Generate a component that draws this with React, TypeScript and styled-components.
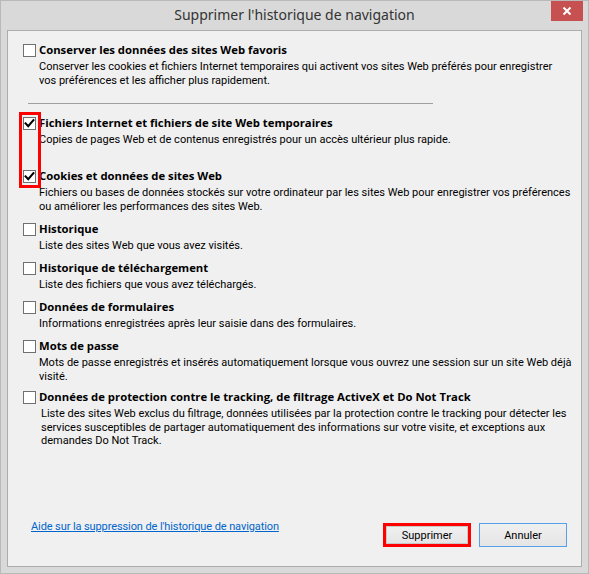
import React from "react";
import styled, { createGlobalStyle } from "styled-components";

const GlobalStyle = createGlobalStyle`
  html, body { margin: 0; padding: 0; background: #d9d9d9; }
  body { font-family: "Roboto", "Liberation Sans", sans-serif; }
`;

const Window = styled.div`
  width: 589px;
  height: 574px;
  box-sizing: border-box;
  border: 1px solid #b9b9b9;
  background: #d9d9d9;
  display: flex;
  flex-direction: column;
`;

const TitleBar = styled.div`
  position: relative;
  height: 29px;
  flex-shrink: 0;
  display: flex;
  justify-content: center;
  align-items: flex-start;
`;

const Title = styled.h1`
  margin: 0;
  font: 400 14px/28px "Noto Sans", "Open Sans", sans-serif;
  color: #333333;
`;

const CloseButton = styled.button`
  position: absolute;
  top: 0;
  right: 5px;
  width: 32px;
  height: 20px;
  padding: 0;
  border: 0;
  background: #c75050;
  display: flex;
  align-items: center;
  justify-content: center;
`;

const Panel = styled.div`
  position: relative;
  flex: 1;
  margin: 0 6px 6px;
  border: 1px solid #adadad;
  background: #f0f0f0;
  display: flex;
  flex-direction: column;
`;

const ItemList = styled.div`
  display: flex;
  flex-direction: column;
  padding: 12px 0 0 15px;
`;

const Item = styled.div<{ $after: number }>`
  display: flex;
  align-items: flex-start;
  margin-bottom: ${(p) => p.$after}px;
`;

const Box = styled.span`
  flex-shrink: 0;
  width: 13px;
  height: 13px;
  box-sizing: border-box;
  margin-top: 1px;
  border: 1px solid #707070;
  background: #ffffff;
  display: flex;
  align-items: center;
  justify-content: center;
`;

const TextCol = styled.div`
  margin-left: 3px;
  display: flex;
  flex-direction: column;
`;

const Heading = styled.div`
  font: 700 11.3px/14px "Open Sans", "Noto Sans", sans-serif;
  color: #000000;
  white-space: nowrap;
`;

const Desc = styled.div<{ $indent: number }>`
  margin-top: 3px;
  padding-left: ${(p) => p.$indent}px;
  font: 400 11px/13.5px "Roboto", "Liberation Sans", sans-serif;
  color: #000000;
  white-space: nowrap;
`;

const Line = styled.span`
  display: block;
`;

const Separator = styled.hr`
  margin: 16px 0 12px 5px;
  width: 405px;
  height: 1px;
  border: 0;
  background: #a0a0a0;
`;

const Highlight = styled.div`
  position: absolute;
  left: 11px;
  top: 81px;
  width: 22px;
  height: 76px;
  box-sizing: border-box;
  border: 3px solid #ff0000;
  pointer-events: none;
`;

const Footer = styled.div`
  margin-top: auto;
  display: flex;
  align-items: flex-start;
  padding: 0 14px 19px 23px;
`;

const HelpLink = styled.a`
  margin-right: auto;
  font: 400 11px/13px "Roboto", "Liberation Sans", sans-serif;
  letter-spacing: -0.1px;
  color: #0066cc;
  text-decoration: underline;
  cursor: pointer;
`;

const Buttons = styled.div`
  margin-top: 3px;
  display: flex;
  gap: 8px;
`;

const DialogButton = styled.button<{ $variant: "highlight" | "focus" }>`
  width: 88px;
  height: 24px;
  box-sizing: border-box;
  padding: 0;
  background: linear-gradient(#f0f0f0, #e5e5e5);
  font: 400 11px/1 "Roboto", "Liberation Sans", sans-serif;
  color: #000000;
  border: ${(p) => (p.$variant === "highlight" ? "3px solid #ff0000" : "1px solid #56a0e8")};
  box-shadow: ${(p) => (p.$variant === "highlight" ? "inset 0 0 0 1px #c8c8c8" : "none")};
`;

type Entry = {
  title: string;
  lines: string[];
  checked: boolean;
  after: number;
  indent?: number;
};

const entries: Entry[] = [
  {
    title: "Fichiers Internet et fichiers de site Web temporaires",
    lines: ["Copies de pages Web et de contenus enregistrés pour un accès ultérieur plus rapide."],
    checked: true,
    after: 22.5,
  },
  {
    title: "Cookies et données de sites Web",
    lines: [
      "Fichiers ou bases de données stockés sur votre ordinateur par les sites Web pour enregistrer vos préférences",
      "ou améliorer les performances des sites Web.",
    ],
    checked: true,
    after: 9,
  },
  {
    title: "Historique",
    lines: ["Liste des sites Web que vous avez visités."],
    checked: false,
    after: 8.5,
  },
  {
    title: "Historique de téléchargement",
    lines: ["Liste des fichiers que vous avez téléchargés."],
    checked: false,
    after: 8.5,
  },
  {
    title: "Données de formulaires",
    lines: ["Informations enregistrées après leur saisie dans des formulaires."],
    checked: false,
    after: 8.5,
  },
  {
    title: "Mots de passe",
    lines: [
      "Mots de passe enregistrés et insérés automatiquement lorsque vous ouvrez une session sur un site Web déjà",
      "visité.",
    ],
    checked: false,
    after: 7,
  },
  {
    title: "Données de protection contre le tracking, de filtrage ActiveX et Do Not Track",
    lines: [
      "Liste des sites Web exclus du filtrage, données utilisées par la protection contre le tracking pour détecter les",
      "services susceptibles de partager automatiquement des informations sur votre visite, et exceptions aux",
      "demandes Do Not Track.",
    ],
    checked: false,
    after: 0,
    indent: 2,
  },
];

function CheckMark() {
  return (
    <svg width="11" height="11" viewBox="0 0 11 11">
      <path d="M1.6 5.4 L4.2 8.2 L9.4 2.2" fill="none" stroke="#000" strokeWidth="2.1" strokeLinecap="square" />
    </svg>
  );
}

function Option({ entry }: { entry: Entry }) {
  return (
    <Item $after={entry.after}>
      <Box>{entry.checked && <CheckMark />}</Box>
      <TextCol>
        <Heading>{entry.title}</Heading>
        <Desc $indent={entry.indent ?? 0}>
          {entry.lines.map((l) => (
            <Line key={l}>{l}</Line>
          ))}
        </Desc>
      </TextCol>
    </Item>
  );
}

export default function App() {
  return (
    <>
      <GlobalStyle />
      <Window>
        <TitleBar>
          <Title>Supprimer l'historique de navigation</Title>
          <CloseButton aria-label="Fermer">
            <svg width="10" height="10" viewBox="0 0 10 10">
              <path d="M1.5 1.5 L8.5 8.5 M8.5 1.5 L1.5 8.5" stroke="#fff" strokeWidth="2" />
            </svg>
          </CloseButton>
        </TitleBar>
        <Panel>
          <ItemList>
            <Item $after={0}>
              <Box />
              <TextCol>
                <Heading>Conserver les données des sites Web favoris</Heading>
                <Desc $indent={0}>
                  <Line>
                    Conserver les cookies et fichiers Internet temporaires qui activent vos sites Web préférés pour enregistrer
                  </Line>
                  <Line>vos préférences et les afficher plus rapidement.</Line>
                </Desc>
              </TextCol>
            </Item>
            <Separator />
            {entries.map((e) => (
              <Option key={e.title} entry={e} />
            ))}
          </ItemList>
          <Highlight />
          <Footer>
            <HelpLink>Aide sur la suppression de l'historique de navigation</HelpLink>
            <Buttons>
              <DialogButton $variant="highlight">Supprimer</DialogButton>
              <DialogButton $variant="focus">Annuler</DialogButton>
            </Buttons>
          </Footer>
        </Panel>
      </Window>
    </>
  );
}
